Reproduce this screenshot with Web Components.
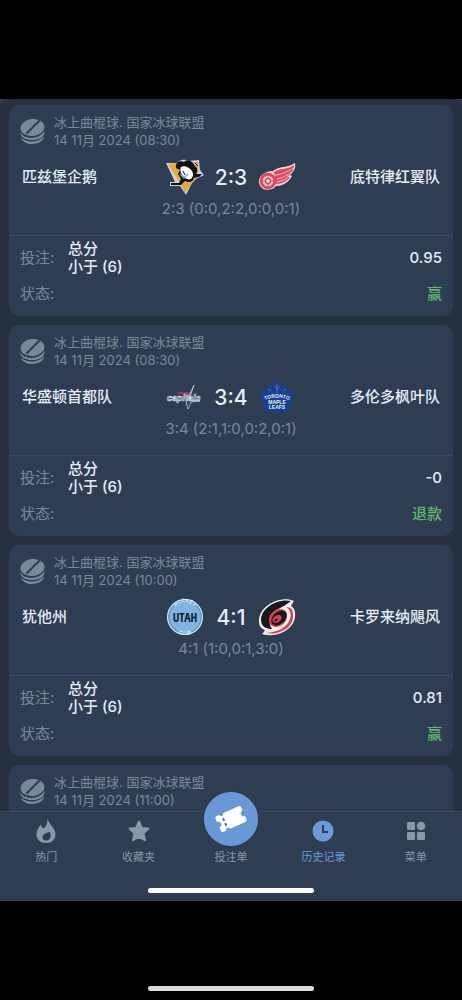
<!DOCTYPE html>
<html lang="zh-CN">
<head>
<meta charset="UTF-8">
<meta name="viewport" content="width=device-width, initial-scale=1">
<title>历史记录</title>
<style>
  body {
    margin: 0;
    background: #000;
    color: #e6edf8;
    font-family: Inter, "Noto Sans CJK SC", sans-serif;
    font-size: 15px;
  }
</style>
</head>
<body>
<bet-app>
  <bet-card hora="08:30" local="匹兹堡企鹅" visitante="底特律红翼队" marcador="2:3"
    parciales="2:3 (0:0,2:2,0:0,0:1)" cuota="0.95" estado="赢">
    <team-logo slot="logo-local" equipo="penguins"></team-logo>
    <team-logo slot="logo-visitante" equipo="redwings"></team-logo>
  </bet-card>
  <bet-card hora="08:30" local="华盛顿首都队" visitante="多伦多枫叶队" marcador="3:4"
    parciales="3:4 (2:1,1:0,0:2,0:1)" cuota="-0" estado="退款">
    <team-logo slot="logo-local" equipo="capitals"></team-logo>
    <team-logo slot="logo-visitante" equipo="leafs"></team-logo>
  </bet-card>
  <bet-card hora="10:00" local="犹他州" visitante="卡罗来纳飓风" marcador="4:1"
    parciales="4:1 (1:0,0:1,3:0)" cuota="0.81" estado="赢">
    <team-logo slot="logo-local" equipo="utah"></team-logo>
    <team-logo slot="logo-visitante" equipo="hurricanes"></team-logo>
  </bet-card>
  <bet-card hora="11:00"></bet-card>
  <tab-bar slot="menu"></tab-bar>
</bet-app>

<script>
// logos.js
const LOGOS = {
  penguins: `
    <path d="M-1 4 L10 4 C13 0 18 0 21 2 L32 1 L33 11 L37 16 L29 20 L25 24 L19 36 L13 27 L3 27 L3 23 L8 23 Z" fill="#c9d2dc"/>
    <path d="M1 5 L31 3 L31 13 L26 23 L18 34 L13 24 Z" fill="#e6aa41"/>
    <path d="M9 9 C8 3 13 1 17 3 C20 0 26 2 27 6 C31 9 31 13 29 15 L35 15 L32 18 L27 19 C26 23 22 24 18 22 L14 26 L4 26 L4 24 L12 24 L14 20 L11 15 L13 11 Z" fill="#101217"/>
    <path d="M14 8 C17 6 22 8 25 12 C28 17 24 22 20 20 C15 18 12 12 14 8 Z" fill="#fff"/>
    <path d="M25 5 L30 10 M28 4 L31 7" stroke="#101217"/>
    <path d="M13 15 L17 19 L21 15" fill="none" stroke="#6fa9d2" stroke-width="1.5"/>
    <path d="M16 12 L18 16" stroke="#101217"/>`,
  redwings: `
    <path d="M36 4 C29 9 20 7 14 12 C5 12 -1 18 0 24 C2 32 12 33 17 27 C24 27 31 22 33 17 L31 16 C35 13 37 9 36 4 Z" fill="#f3d6dc"/>
    <path d="M35 6 C29 11 20 9 15 13 L17 25 C25 25 30 20 31 18 L28 18 C33 15 35 11 35 6 Z" fill="#da4c5d"/>
    <path d="M16 16 C22 16 29 12 35 9 M18 20 C23 19 29 16 33 13 M18 23 C23 22 28 20 31 17" fill="none" stroke="#f3d6dc" stroke-width=".8"/>
    <circle cx="9" cy="22" r="6.800" fill="none" stroke="#da4c5d" stroke-width="3"/>
    <circle cx="9" cy="22" r="2.600" fill="#f3d6dc" stroke="#da4c5d" stroke-width="1.500"/>
    <path d="M9 17v2 M9 25v2 M4 22h2 M12 22h2" stroke="#da4c5d"/>`,
  capitals: `
    <path d="M10 14 h13" stroke="#a82f50" stroke-width="2"/>
    <path d="M27 6 L22 21 L33 22 L24 23 L21 30 L19 23 Z" fill="#24426d" stroke="#c7d1df" stroke-width=".8"/>
    <text x="0" y="22" font-family="Liberation Sans, sans-serif" font-size="9" font-weight="700" font-style="italic" fill="#3a3f62" stroke="#dfe5ee" stroke-width=".6">capitals</text>
    <path d="M20 26 l3 -1 l-2 4 Z" fill="#a82f50"/>`,
  leafs: `
    <path d="M18 0 L22 8 L27 5 L27 12 L36 12 L33 17 L35 21 L30 26 L31 32 L24 32 L19 34 L18 36 L17 34 L12 32 L5 32 L6 26 L1 21 L3 17 L0 12 L9 12 L9 5 L14 8 Z" fill="#164090"/>
    <path d="M18 5 v9 M18 10 l3 -3 M18 10 l-3 -3 M24 12 l3 -2 M12 12 l-3 -2" stroke="#5b84c4" stroke-width=".8" fill="none"/>
    <defs><path id="arco" d="M4 22 Q18 15 32 22"/></defs>
    <g fill="#eef4fc" font-family="Liberation Sans, sans-serif" font-weight="700" text-anchor="middle">
      <text font-size="5"><textPath href="#arco" startOffset="50%">TORONTO</textPath></text>
      <text x="18" y="25" font-size="5">MAPLE</text>
      <text x="18" y="30" font-size="5">LEAFS</text>
    </g>`,
  utah: `
    <circle cx="18" cy="18" r="18" fill="#dcecfa"/>
    <circle cx="18" cy="18" r="17" fill="#6598cc"/>
    <circle cx="18" cy="18" r="15.500" fill="#80b3e2"/>
    <defs>
      <path id="arriba" d="M6 15 A12 12 0 0 1 30 15"/>
      <path id="abajo" d="M3 21 A15 15 0 0 0 33 21"/>
    </defs>
    <g fill="#dcecfa" font-family="Liberation Sans, sans-serif" font-weight="700" font-size="5" text-anchor="middle">
      <text><textPath href="#arriba" startOffset="50%">HOCKEY</textPath></text>
      <text><textPath href="#abajo" startOffset="50%">CLUB</textPath></text>
    </g>
    <text x="18" y="23" text-anchor="middle" font-family="Liberation Sans Narrow, Open Sans Condensed, Roboto Condensed, Liberation Sans, sans-serif" font-size="12" font-weight="700" fill="#101c2c">UTAH</text>`,
  hurricanes: `
    <path d="M35 2 C24 -4 0 5 0 22 C0 28 3 30 6 31 C5 33 4 34 3 35 C19 40 38 29 36 14 C36 10 34 8 32 7 C33 5 34 3 35 2 Z" fill="#f4eeee"/>
    <path d="M32 2 C20 -1 2 8 2 21 C2 28 8 30 13 30 C8 23 12 13 21 9 C25 7 28 5 32 2 Z" fill="#17191f"/>
    <path d="M27 8 C36 13 31 27 20 31 C15 33 10 34 7 34 C20 37 36 28 34 15 C34 11 32 8 27 8 Z" fill="#d4444e"/>
    <ellipse cx="19" cy="19" rx="10" ry="8" transform="rotate(-42 19 19)" fill="#d4444e"/>
    <ellipse cx="20" cy="19" rx="9" ry="6" transform="rotate(-42 20 19)" fill="#17191f"/>
    <ellipse cx="18" cy="20" rx="5" ry="3.500" transform="rotate(-35 18 20)" fill="#d4444e"/>
    <ellipse cx="17" cy="21" rx="2" ry="1.200" transform="rotate(-35 17 21)" fill="#17191f"/>`
};

class TeamLogo extends HTMLElement {
  constructor() {
    super();
    this.attachShadow({ mode: "open" });
  }

  connectedCallback() {
    this.shadowRoot.innerHTML = `
      <style>
        :host { display: block; width: 36px; height: 36px; }
        svg { display: block; overflow: visible; }
      </style>
      <svg width="36" height="36" viewBox="0 0 36 36" aria-hidden="true">${LOGOS[this.getAttribute("equipo")]}</svg>
    `;
  }
}

customElements.define("team-logo", TeamLogo);

// tarjeta de apuesta
class BetCard extends HTMLElement {
  constructor() {
    super();
    this.attachShadow({ mode: "open" });
  }

  connectedCallback() {
    this.render();
  }

  render() {
    const dato = (nombre) => this.getAttribute(nombre) || "";

    // sin equipos solo se pinta la cabecera
    const detalle = !this.hasAttribute("local") ? "" : `
      <div class="partido">
        <span class="equipo">${dato("local")}</span>
        <div class="centro">
          <slot name="logo-local"></slot>
          <span class="marcador">${dato("marcador")}</span>
          <slot name="logo-visitante"></slot>
        </div>
        <span class="equipo visitante">${dato("visitante")}</span>
      </div>
      <div class="parciales">${dato("parciales")}</div>
      <dl>
        <div class="fila apuesta">
          <dt>投注:</dt>
          <dd class="seleccion">总分<br>小于 (6)</dd>
          <dd>${dato("cuota")}</dd>
        </div>
        <div class="fila">
          <dt>状态:</dt>
          <dd class="estado">${dato("estado")}</dd>
        </div>
      </dl>
    `;

    this.shadowRoot.innerHTML = `
      <style>
        :host {
          display: block;
          flex: none;
          background: #2f3d53;
          border-radius: 10px;
          min-height: 120px;
        }
        header {
          display: flex;
          align-items: center;
          gap: 8px;
          padding: 8px 10px 0;
          color: #7c8798;
          font-size: 13px;
          line-height: 18px;
        }
        header p {
          margin: 0;
        }
        .partido {
          display: grid;
          grid-template-columns: 1fr auto 1fr;
          align-items: center;
          padding: 10px 13px 0;
        }
        .equipo {
          font-weight: 500;
          line-height: 18px;
        }
        .visitante {
          text-align: right;
        }
        .centro {
          display: flex;
          align-items: center;
        }
        .marcador {
          width: 56px;
          text-align: center;
          font-size: 21px;
          font-weight: 500;
        }
        .parciales {
          padding: 4px 0 16px;
          line-height: 20px;
          text-align: center;
          color: #7c8798;
        }
        dl {
          margin: 0;
          padding: 4px 11px 12px;
          border-top: 1px solid #3b4a61;
          line-height: 18px;
        }
        .fila {
          display: flex;
          align-items: center;
          justify-content: space-between;
        }
        .apuesta {
          padding-bottom: 8px;
        }
        .fila:last-child {
          min-height: 20px;
        }
        dt {
          width: 48px;
          color: #7c8798;
        }
        dd {
          margin: 0;
          font-weight: 500;
        }
        .seleccion {
          flex: 1;
        }
        .estado {
          color: #5fb56b;
        }
      </style>
      <header>
        <svg width="27" height="27" viewBox="0 0 27 27" aria-hidden="true">
          <ellipse cx="13.500" cy="9.500" rx="12" ry="8.500" transform="rotate(-6 13.500 9.500)" fill="#7c8798"/>
          <path d="M20 3 L8 15" stroke="#2f3d53" stroke-width="2" stroke-linecap="round"/>
          <path d="M1 14 C5 22 20 22 25.500 13 C26 18 22 21.500 15 22 C8 22.500 1.500 20 1 14 Z" fill="#7c8798"/>
          <path d="M2 20 C9 25 19 25 25 18.500 C25 23 19 26 13 26 C8 26 4 24 2 20 Z" fill="#7c8798"/>
        </svg>
        <div>
          <p>冰上曲棍球. 国家冰球联盟</p>
          <p>14 11月 2024 (${dato("hora")})</p>
        </div>
      </header>
      ${detalle}
    `;
  }
}

customElements.define("bet-card", BetCard);

// menú inferior
class TabBar extends HTMLElement {
  constructor() {
    super();
    this.attachShadow({ mode: "open" });
  }

  connectedCallback() {
    this.shadowRoot.innerHTML = `
      <style>
        :host {
          display: block;
          position: relative;
          background: #2f3d53;
          border-top: 1px solid #3b4a61;
        }
        nav {
          display: grid;
          grid-template-columns: repeat(5, 1fr);
          padding: 7px 0 15px;
        }
        a {
          display: flex;
          flex-direction: column;
          align-items: center;
          gap: 5px;
          color: #8b97a6;
          font-size: 11px;
          line-height: 18px;
          text-decoration: none;
        }
        a svg {
          display: block;
          fill: currentColor;
        }
        .activo {
          color: #6b9ad6;
        }
        /* el círculo sobresale por encima de la barra */
        .cupon {
          gap: 0;
        }
        .circulo {
          display: flex;
          align-items: center;
          justify-content: center;
          width: 54px;
          height: 54px;
          margin-top: -29px;
          border: 2px solid #2f3d53;
          border-radius: 50%;
          background: #6899d6;
          color: #fff;
        }
      </style>
      <nav>
        <a href="#hot">
          <svg width="24" height="24" viewBox="0 0 24 24" aria-hidden="true"><path fill-rule="evenodd" d="M13.500 0 C15 5 21.500 9 21.500 15.500 C21.500 20.500 17.500 24 12 24 C6.500 24 2.500 20.500 2.500 15.500 C2.500 11 5 8.500 7 5.500 C7.500 7.500 8 9 9.500 9.500 C12.500 7.500 13.500 4 13.500 0 Z M16 13 C12 13.500 8.500 15.500 8.500 18 C8.500 20.500 10 21.500 12 21.500 C15 21.500 16.500 19.500 16.500 17 C16.500 15.500 16.500 14 16 13 Z"/></svg>
          热门
        </a>
        <a href="#favoritos">
          <svg width="24" height="24" viewBox="0 0 24 24" aria-hidden="true"><path d="M12 2.500 L14.800 9 L21.500 9.500 L16.500 14.200 L18 21.200 L12 17.800 L6 21.200 L7.500 14.200 L2.500 9.500 L9.200 9 Z" stroke="currentColor" stroke-width="2" stroke-linejoin="round"/></svg>
          收藏夹
        </a>
        <a href="#cupon" class="cupon">
          <span class="circulo">
            <svg width="34" height="30" viewBox="0 0 34 30" aria-hidden="true">
              <g transform="rotate(-24 17 15)">
                <path d="M5 6.500 H8 A2 2 0 0 0 12 6.500 H29 Q31 6.500 31 8.500 V12 A3 3 0 0 0 31 18 V21.500 Q31 23.500 29 23.500 H12 A2 2 0 0 0 8 23.500 H5 Q3 23.500 3 21.500 V18 A3 3 0 0 0 3 12 V8.500 Q3 6.500 5 6.500 Z"/>
                <path d="M10 11 v3 M10 16.500 v3" stroke="#4d6f9f" stroke-width="2"/>
              </g>
            </svg>
          </span>
          投注单
        </a>
        <a href="#historial" class="activo" aria-current="page">
          <svg width="24" height="24" viewBox="0 0 24 24" aria-hidden="true"><circle cx="12" cy="12" r="10.500"/><path d="M12 6 V13 H17" fill="none" stroke="#2f3d53" stroke-width="2"/></svg>
          历史记录
        </a>
        <a href="#menu">
          <svg width="24" height="24" viewBox="0 0 24 24" aria-hidden="true"><rect x="3" y="3" width="8" height="8" rx="1"/><circle cx="17" cy="7" r="4.300"/><rect x="3" y="13" width="8" height="8" rx="1"/><rect x="13" y="13" width="8" height="8" rx="1"/></svg>
          菜单
        </a>
      </nav>
    `;
  }
}

customElements.define("tab-bar", TabBar);

// pantalla completa con franjas negras arriba y abajo
class BetApp extends HTMLElement {
  constructor() {
    super();
    this.attachShadow({ mode: "open" });
  }

  connectedCallback() {
    this.shadowRoot.innerHTML = `
      <style>
        :host {
          display: flex;
          flex-direction: column;
          height: 100vh;
          box-sizing: border-box;
          padding: 99px 0 9px;
        }
        main {
          flex: 1;
          min-height: 0;
          overflow: hidden;
          display: flex;
          flex-direction: column;
          gap: 9px;
          padding: 6px 9px 0;
          background: #26303e;
          border-radius: 8px 8px 0 0;
        }
        .pantalla {
          flex: 1;
          min-height: 0;
          display: flex;
          flex-direction: column;
          background: #2f3d53;
        }
        .barra {
          width: 36%;
          height: 5px;
          margin: 0 auto;
          border-radius: 3px;
          background: #fff;
          flex: none;
        }
        .pie {
          padding: 7px 0 8px;
        }
        .exterior {
          margin-top: 85px;
          background: #dcdcdc;
        }
      </style>
      <div class="pantalla">
        <main><slot></slot></main>
        <slot name="menu"></slot>
        <div class="pie"><div class="barra"></div></div>
      </div>
      <div class="barra exterior"></div>
    `;
  }
}

customElements.define("bet-app", BetApp);
</script>
</body>
</html>
